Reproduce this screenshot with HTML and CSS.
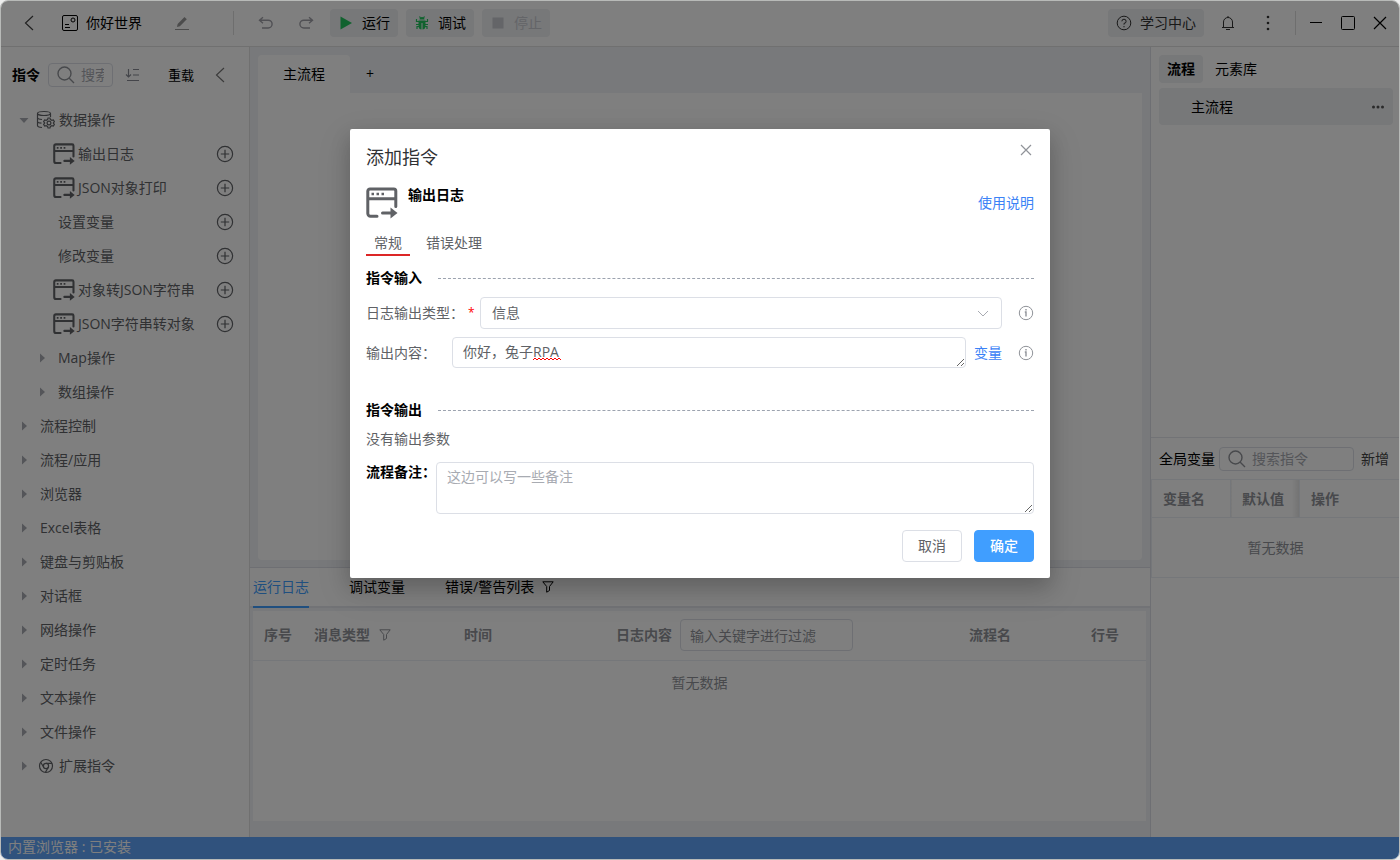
FILE: index.html
```html
<!DOCTYPE html>
<html lang="zh-CN">
<head>
<meta charset="utf-8">
<meta name="viewport" content="width=device-width, initial-scale=1">
<title>你好世界</title>
<link rel="stylesheet" href="styles.css">
</head>
<body>
<svg class="sprite" aria-hidden="true">
  <symbol id="i-window" viewBox="0 0 32 32"><path d="M11 29.200H4.500a2.700 2.700 0 0 1-2.700-2.700V4.200a2.200 2.200 0 0 1 2.200-2.200h23.800a2 2 0 0 1 2 2v15.500M2 11.700h27.500M16.500 26H27" fill="none" stroke="currentColor" stroke-width="3" stroke-linecap="round"/><path d="M24.500 20.500l7 5.500-7 5.500z" fill="currentColor"/><path d="M5.500 7H8M10.500 7H13M15.500 7H18" stroke="currentColor" stroke-width="2.500"/></symbol>
  <symbol id="i-plus" viewBox="0 0 18 18"><g fill="none" stroke="currentColor" stroke-width="1.200"><circle cx="9" cy="9" r="7.600"/><path d="M9 4.800v8.400M4.800 9h8.400"/></g></symbol>
  <symbol id="i-caret" viewBox="0 0 8 10"><path d="M2 .5v9L7 5z" fill="currentColor"/></symbol>
  <symbol id="i-left" viewBox="0 0 12 16"><path d="M10 1L2.500 8l7.500 7" fill="none" stroke="currentColor" stroke-width="1.200"/></symbol>
  <symbol id="i-search" viewBox="0 0 18 18"><path d="M12.500 12.500L17 17M14 7.500a6.500 6.500 0 1 1-13 0 6.500 6.500 0 0 1 13 0z" fill="none" stroke="currentColor" stroke-width="1.400"/></symbol>
  <symbol id="i-filter" viewBox="0 0 12 12"><path d="M.8.800h10.400L7.500 5.500v4L4.700 11.200V5.500z" fill="none" stroke="currentColor"/></symbol>
  <symbol id="i-info" viewBox="0 0 16 16"><circle cx="8" cy="8" r="6.700" fill="none" stroke="currentColor"/><path d="M8 4v1.500M6.800 7H8v4.500" fill="none" stroke="currentColor" stroke-width="1.400"/></symbol>
  <symbol id="i-undo" viewBox="0 0 16 16"><path d="M5 2.200L1.500 5.200l3.500 3M1.500 5.200h8.700a3.900 3.900 0 0 1 0 7.800H4" fill="none" stroke="currentColor" stroke-width="1.400"/></symbol>
</svg>

<div class="window">
  <header class="topbar">
    <button class="icon-btn back" aria-label="返回"><svg width="12" height="16"><use href="#i-left"/></svg></button>
    <svg class="doc" width="18" height="18" viewBox="0 0 18 18" fill="none" stroke="currentColor"><rect x="1.500" y="1.500" width="15" height="15" rx="1.500"/><circle cx="12" cy="6" r="2"/><path d="M4 10.500h4M4 13.500h5"/></svg>
    <span class="name">你好世界</span>
    <button class="icon-btn edit" aria-label="编辑"><svg width="16" height="16" viewBox="0 0 16 16"><path d="M1 14.500h14" stroke="currentColor"/><path d="M3 12l.6-3L10.500 2l2.300 2.300-6.900 7z" fill="currentColor"/></svg></button>
    <span class="divider"></span>
    <button class="icon-btn undo" aria-label="撤销"><svg width="16" height="16"><use href="#i-undo"/></svg></button>
    <button class="icon-btn redo" aria-label="重做"><svg class="flip" width="16" height="16"><use href="#i-undo"/></svg></button>
    <div class="actions">
      <button class="pill"><svg width="16" height="16" viewBox="0 0 16 16"><path d="M2.500 1.500l11.500 6.500-11.500 6.500z" fill="#22c55e"/></svg>运行</button>
      <button class="pill"><svg width="16" height="16" viewBox="0 0 16 16"><path d="M5.500 4.500a2.500 2.500 0 0 1 5 0zM4.500 5.500h7v5.500a3.500 3.500 0 0 1-7 0z" fill="#22c55e"/><path d="M5.500 1.500L6.500 3M10.500 1.500L9.500 3M2.500 4v2.500h3M13.500 4v2.500h-3M2 9.500h12M3 14v-2.500h3M13 14v-2.500h-3" fill="none" stroke="#22c55e" stroke-width="1.200"/><path d="M8 8v7" stroke="#f3f4f6"/></svg>调试</button>
      <button class="pill" disabled><svg width="16" height="16" viewBox="0 0 16 16"><path d="M2.500 2.500h11v11h-11z" fill="currentColor"/></svg>停止</button>
    </div>
    <button class="pill help"><svg width="16" height="16" viewBox="0 0 16 16" fill="none" stroke="currentColor"><circle cx="8" cy="8" r="6.800"/><path d="M5.900 6.300A2.100 2.100 0 1 1 8 8.400v1.200M8 11v1.300"/></svg>学习中心</button>
    <button class="icon-btn wide" aria-label="通知"><svg width="16" height="16" viewBox="0 0 16 16" fill="none" stroke="currentColor"><path d="M3.500 12V7a4.500 4.500 0 0 1 9 0v5M2 12.500h12M6 14.500h4M8 1v1.500"/></svg></button>
    <button class="icon-btn wide" aria-label="更多"><svg width="16" height="16" viewBox="0 0 16 16" fill="currentColor"><circle cx="8" cy="2" r="1.300"/><circle cx="8" cy="8" r="1.300"/><circle cx="8" cy="14" r="1.300"/></svg></button>
    <span class="divider right"></span>
    <div class="winctl">
      <button class="icon-btn" aria-label="最小化"><svg width="16" height="16" viewBox="0 0 16 16" stroke="currentColor"><path d="M2 7.500h12"/></svg></button>
      <button class="icon-btn" aria-label="最大化"><svg width="16" height="16" viewBox="0 0 16 16" fill="none" stroke="currentColor"><rect x="1.500" y="1.500" width="13" height="13" rx="1"/></svg></button>
      <button class="icon-btn" aria-label="关闭"><svg width="16" height="16" viewBox="0 0 16 16" stroke="currentColor" stroke-width="1.200"><path d="M2 2l12 12M14 2L2 14"/></svg></button>
    </div>
  </header>

  <div class="body">
    <aside class="sidebar">
      <div class="side-head">
        <b>指令</b>
        <label class="search"><svg width="18" height="18"><use href="#i-search"/></svg><input type="text" placeholder="搜索指令" aria-label="搜索指令"></label>
        <button class="icon-btn sort" aria-label="排序"><svg width="16" height="16" viewBox="0 0 16 16" fill="none" stroke="currentColor" stroke-width="1.200"><path d="M3.500 2v8M1 7.500L3.500 10 6 7.500M8 2.500h6M8 8h6M2 13.500h12"/></svg></button>
        <button class="reload">重载</button>
        <button class="icon-btn fold" aria-label="收起"><svg width="12" height="16"><use href="#i-left"/></svg></button>
      </div>
      <ul class="tree">
        <li class="open"><svg class="caret" width="8" height="10"><use href="#i-caret"/></svg><svg class="group" width="20" height="20" viewBox="0 0 20 20" fill="none" stroke="currentColor" stroke-width="1.200"><ellipse cx="8" cy="3.500" rx="6.500" ry="2"/><path d="M1.500 3.500v12c0 1 2 1.800 4.500 2M14.500 3.500V7M1.500 7.500c0 1 2 1.800 4.500 2M1.500 11.500c0 1 2 1.500 4 1.700"/><circle cx="13" cy="13" r="1.900"/><path d="M12 8h2l.4 1.600 1.500.8 1.500-.5 1 1.700-1.100 1.400 1.100 1.400-1 1.700-1.500-.5-1.500.8L14 18h-2l-.4-1.600-1.500-.8-1.500.5-1-1.700L8.700 13l-1.100-1.400 1-1.700 1.500.5 1.500-.8z"/></svg>数据操作</li>
        <li class="leaf"><svg width="22" height="22"><use href="#i-window"/></svg>输出日志<button class="icon-btn" aria-label="添加"><svg width="18" height="18"><use href="#i-plus"/></svg></button></li>
        <li class="leaf"><svg width="22" height="22"><use href="#i-window"/></svg>JSON对象打印<button class="icon-btn" aria-label="添加"><svg width="18" height="18"><use href="#i-plus"/></svg></button></li>
        <li class="leaf plain">设置变量<button class="icon-btn" aria-label="添加"><svg width="18" height="18"><use href="#i-plus"/></svg></button></li>
        <li class="leaf plain">修改变量<button class="icon-btn" aria-label="添加"><svg width="18" height="18"><use href="#i-plus"/></svg></button></li>
        <li class="leaf"><svg width="22" height="22"><use href="#i-window"/></svg>对象转JSON字符串<button class="icon-btn" aria-label="添加"><svg width="18" height="18"><use href="#i-plus"/></svg></button></li>
        <li class="leaf"><svg width="22" height="22"><use href="#i-window"/></svg>JSON字符串转对象<button class="icon-btn" aria-label="添加"><svg width="18" height="18"><use href="#i-plus"/></svg></button></li>
        <li class="sub"><svg class="caret" width="8" height="10"><use href="#i-caret"/></svg>Map操作</li>
        <li class="sub"><svg class="caret" width="8" height="10"><use href="#i-caret"/></svg>数组操作</li>
        <li><svg class="caret" width="8" height="10"><use href="#i-caret"/></svg>流程控制</li>
        <li><svg class="caret" width="8" height="10"><use href="#i-caret"/></svg>流程/应用</li>
        <li><svg class="caret" width="8" height="10"><use href="#i-caret"/></svg>浏览器</li>
        <li><svg class="caret" width="8" height="10"><use href="#i-caret"/></svg>Excel表格</li>
        <li><svg class="caret" width="8" height="10"><use href="#i-caret"/></svg>键盘与剪贴板</li>
        <li><svg class="caret" width="8" height="10"><use href="#i-caret"/></svg>对话框</li>
        <li><svg class="caret" width="8" height="10"><use href="#i-caret"/></svg>网络操作</li>
        <li><svg class="caret" width="8" height="10"><use href="#i-caret"/></svg>定时任务</li>
        <li><svg class="caret" width="8" height="10"><use href="#i-caret"/></svg>文本操作</li>
        <li><svg class="caret" width="8" height="10"><use href="#i-caret"/></svg>文件操作</li>
        <li><svg class="caret" width="8" height="10"><use href="#i-caret"/></svg><svg class="ext" width="16" height="16" viewBox="0 0 16 16" fill="none" stroke="currentColor" stroke-width="1.200"><circle cx="8" cy="8" r="6.500"/><circle cx="8" cy="8" r="2.600"/><path d="M8 5.400h6M5.700 9.300L2.700 4.300M10.300 9.300L7.400 14.400"/></svg>扩展指令</li>
      </ul>
    </aside>

    <main class="center">
      <section class="work">
        <div class="work-tabs"><button class="work-tab">主流程</button><button class="add-tab" aria-label="新增">+</button></div>
        <div class="canvas"></div>
      </section>
      <section class="logs">
        <div class="log-tabs">
          <button class="active">运行日志</button>
          <button>调试变量</button>
          <button>错误/警告列表<svg width="12" height="12"><use href="#i-filter"/></svg></button>
        </div>
        <div class="log-body">
          <table class="log-table">
            <colgroup><col class="c-no"><col class="c-type"><col class="c-time"><col><col class="c-flow"><col class="c-line"></colgroup>
            <thead><tr>
              <th>序号</th>
              <th>消息类型<svg class="filter" width="12" height="12"><use href="#i-filter"/></svg></th>
              <th>时间</th>
              <th><label class="filter-field">日志内容<input type="text" placeholder="输入关键字进行过滤"></label></th>
              <th>流程名</th>
              <th>行号</th>
            </tr></thead>
            <tbody><tr><td colspan="6">暂无数据</td></tr></tbody>
          </table>
        </div>
      </section>
    </main>

    <aside class="panel">
      <section class="flows">
        <div class="panel-tabs"><button class="on">流程</button><button>元素库</button></div>
        <div class="flow-item">主流程<button class="icon-btn" aria-label="更多"><svg width="14" height="14" viewBox="0 0 14 14" fill="currentColor"><circle cx="2.500" cy="7" r="1.500"/><circle cx="7" cy="7" r="1.500"/><circle cx="11.500" cy="7" r="1.500"/></svg></button></div>
      </section>
      <section class="vars">
        <div class="vars-head">
          <span>全局变量</span>
          <label class="search"><svg width="18" height="18"><use href="#i-search"/></svg><input type="text" placeholder="搜索指令" aria-label="搜索变量"></label>
          <button>新增</button>
        </div>
        <table class="vars-table">
          <colgroup><col class="v-name"><col class="v-value"><col></colgroup>
          <thead><tr><th>变量名</th><th class="edge">默认值</th><th>操作</th></tr></thead>
          <tbody><tr><td colspan="3">暂无数据</td></tr></tbody>
        </table>
      </section>
    </aside>
  </div>
  <footer class="status">内置浏览器 : 已安装</footer>

  <div class="overlay">
    <form class="dialog" role="dialog" aria-labelledby="dlg-title">
      <div class="dlg-head"><h1 id="dlg-title">添加指令</h1><button type="button" class="icon-btn" aria-label="关闭"><svg width="16" height="16" viewBox="0 0 16 16" stroke="currentColor" stroke-width="1.200"><path d="M3 3l10 10M13 3L3 13"/></svg></button></div>
      <div class="cmd"><svg width="32" height="32"><use href="#i-window"/></svg><h2>输出日志</h2><a href="#help">使用说明</a></div>
      <div class="dlg-tabs"><button type="button" class="active">常规</button><button type="button">错误处理</button></div>
      <h3 class="sect">指令输入</h3>
      <div class="fields">
        <div class="field">
          <label for="log-type">日志输出类型：</label><span class="req">*</span>
          <div class="select"><select id="log-type"><option>信息</option></select><svg width="12" height="8" viewBox="0 0 12 8" fill="none" stroke="currentColor"><path d="M1 1l5 5 5-5"/></svg></div>
          <svg class="info" width="16" height="16"><use href="#i-info"/></svg>
        </div>
        <div class="field text">
          <label class="fixed" for="log-text">输出内容：</label>
          <div class="spell"><textarea id="log-text" rows="1" spellcheck="false">你好，兔子RPA</textarea><svg class="wave" width="28" height="4" viewBox="0 0 28 4" fill="none" stroke="#f00"><path d="M0 3l2-2 2 2 2-2 2 2 2-2 2 2 2-2 2 2 2-2 2 2 2-2 2 2 2-2 2 2"/></svg></div>
          <button type="button" class="var">变量</button>
          <svg class="info" width="16" height="16"><use href="#i-info"/></svg>
        </div>
      </div>
      <h3 class="sect out">指令输出</h3>
      <p class="none">没有输出参数</p>
      <div class="remark"><label for="remark">流程备注：</label><textarea id="remark" placeholder="这边可以写一些备注"></textarea></div>
      <div class="dlg-foot"><button type="button" class="btn">取消</button><button type="button" class="btn primary">确定</button></div>
    </form>
  </div>
</div>
</body>
</html>
```
FILE: styles.css
```css
* { box-sizing: border-box; }
body {
  margin: 0;
  background: #eee;
  color: #000;
  font: 14px/20px "Open Sans", "Noto Sans CJK SC", sans-serif;
}
button, input, select, textarea { font: inherit; color: inherit; }
button { padding: 0; border: 0; background: none; cursor: pointer; white-space: nowrap; }
svg { display: block; flex: none; }
h1, h2, h3, p, ul { margin: 0; padding: 0; }
.sprite { position: absolute; width: 0; height: 0; }

.window {
  position: relative;
  display: flex;
  flex-direction: column;
  height: 100vh;
  border: 1px solid #b8bab8;
  border-radius: 8px;
  overflow: hidden;
  background: #fff;
}
.icon-btn { display: flex; align-items: center; justify-content: center; flex: none; }

/* top bar */
.topbar {
  display: flex;
  align-items: center;
  height: 46px;
  flex: none;
  padding: 0 11px 2px 22px;
  border-bottom: 1px solid #e0e0e0;
}
.back { color: #444; }
.doc { margin: 0 7px 0 26px; }
.name { width: 88px; }
.edit { color: #999; }
.divider { width: 1px; height: 24px; margin: 0 24px 0 43px; background: #dcdcdc; }
.undo, .redo { color: #a0a0a8; }
.redo { margin: 0 16px 0 24px; }
.flip { transform: scaleX(-1); }
.actions { display: flex; gap: 8px; }
.pill {
  display: flex;
  align-items: center;
  gap: 8px;
  height: 28px;
  padding: 0 8px;
  border-radius: 4px;
  background: #eef0f3;
}
.pill:disabled { color: #c8cad0; }
.help { margin-left: auto; margin-right: 4px; color: #333; }
.wide { width: 40px; color: #333; }
.divider.right { margin: 0 12px 0 7px; }
.winctl { display: flex; gap: 16px; }

.body { display: flex; flex: 1; min-height: 0; }

/* left tree */
.sidebar { width: 249px; flex: none; border-right: 1px solid #e0e0e0; }
.side-head { display: flex; align-items: center; height: 56px; padding: 0 23px 0 11px; }
.search {
  display: flex;
  align-items: center;
  gap: 6px;
  height: 24px;
  padding: 0 8px;
  border: 1px solid #dcdfe6;
  border-radius: 4px;
  color: #909399;
}
.search input { flex: 1; min-width: 0; padding: 0; border: 0; outline: 0; background: none; }
::placeholder { color: #a8abb2; opacity: 1; }
.side-head .search { width: 65px; margin-left: 8px; }
.sort { margin: 0 27px 0 12px; color: #888b94; }
.reload { font-size: 13px; }
.fold { margin-left: auto; color: #777; }
.tree { list-style: none; color: #606266; }
.tree li { display: flex; align-items: center; height: 34px; padding: 0 16px 0 19px; }
.tree .caret { margin-right: 12px; color: #a8abb2; }
.tree .open .caret { transform: rotate(90deg); margin-right: 8px; }
.tree .sub { padding-left: 37px; }
.tree .leaf { padding: 0 15px 0 52px; }
.tree .leaf > svg { margin-right: 3px; }
.tree .plain { padding-left: 57px; }
.tree .leaf button { margin-left: auto; }
.group { margin-right: 3px; }
.ext { margin: 0 5px 0 -2px; }

/* centre */
.center { display: flex; flex-direction: column; flex: 1; min-width: 0; background: #f1f3f6; }
.work { display: flex; flex-direction: column; flex: 1; padding: 8px 8px 7px; }
.work-tabs { display: flex; }
.work-tab { width: 92px; height: 38px; background: #fff; border-radius: 4px 4px 0 0; }
.add-tab { width: 40px; }
.canvas { flex: 1; background: #fff; border-radius: 0 0 4px 4px; }
.logs { display: flex; flex-direction: column; height: 270px; border-top: 1px solid #dcdfe6; }
.log-tabs { display: flex; gap: 40px; padding-left: 3px; border-bottom: 2px solid #e4e7ed; background: #fff; }
.log-tabs button { display: flex; align-items: center; gap: 8px; height: 40px; margin-bottom: -2px; border-bottom: 2px solid transparent; }
.log-tabs .active { color: #409eff; border-color: #409eff; }
.log-body { flex: 1; margin: 3px 4px 16px 3px; background: #fff; }
table { width: 100%; border-collapse: collapse; table-layout: fixed; }
th { color: #909399; text-align: left; white-space: nowrap; }
td { padding: 0; text-align: center; color: #909399; }
.log-table th { height: 49px; padding: 0 0 0 11px; border-bottom: 1px solid #ebeef5; }
.log-table td { height: 45px; }
.c-no { width: 50px; }
.c-type { width: 150px; }
.c-time { width: 152px; }
.c-flow { width: 122px; }
.c-line { width: 66px; }
.filter { display: inline-block; margin-left: 9px; vertical-align: -1px; }
.filter-field { display: flex; align-items: center; gap: 8px; }
.filter-field input { width: 173px; height: 32px; padding: 0 9px; border: 1px solid #dcdfe6; border-radius: 4px; font-weight: 400; background: #fff; }
.filter-field input::placeholder { color: #909399; }

/* right panel */
.panel { display: flex; flex-direction: column; width: 249px; flex: none; border-left: 1px solid #dcdfe6; }
.flows { flex: none; height: 391px; padding: 8px 6px 0 8px; border-bottom: 1px solid #e4e7ed; }
.panel-tabs { display: flex; gap: 4px; margin-bottom: 5px; }
.panel-tabs button { height: 28px; padding: 0 8px; border-radius: 4px; }
.panel-tabs .on { background: #eef0f3; font-weight: 700; }
.flow-item { display: flex; align-items: center; justify-content: space-between; height: 37px; padding: 0 8px 0 32px; border-radius: 4px; background: #eef0f3; }
.flow-item button { color: #555; }
.vars-head { display: flex; align-items: center; gap: 4px; height: 41px; padding: 0 10px 0 8px; white-space: nowrap; }
.vars-head .search { flex: 1; min-width: 0; margin-right: 3px; }
.vars-head button { color: #444; }
.vars-table { border: 1px solid #ebeef5; border-right: 0; }
.vars-table th { height: 38px; padding: 0 0 0 11px; border: 1px solid #ebeef5; border-right: 0; }
.vars-table .edge { background: linear-gradient(to left, #e6e6e6, #fff 8px); }
.vars-table td { height: 60px; }
.v-name { width: 79px; }
.v-value { width: 69px; }

.status { flex: none; height: 22px; padding-left: 7px; background: #60a5fa; color: #fff; }

/* dialog */
.overlay {
  position: absolute;
  inset: 0;
  display: flex;
  align-items: flex-start;
  justify-content: center;
  padding-top: 128px;
  background: rgba(0, 0, 0, .5);
}
.dialog {
  width: 700px;
  max-width: 100%;
  padding: 16px;
  border-radius: 2px;
  background: #fff;
  color: #606266;
  box-shadow: 0 12px 32px 4px rgba(0, 0, 0, .1), 0 8px 20px rgba(0, 0, 0, .16);
}
.dlg-head { display: flex; justify-content: space-between; align-items: flex-start; height: 24px; color: #909399; }
.dlg-head h1 { font-size: 18px; line-height: 24px; font-weight: 400; color: #303133; }
.dlg-head button { margin-top: -3px; }
.cmd { display: flex; align-items: center; gap: 10px; margin-top: 18px; }
.cmd h2 { align-self: flex-start; font-size: 14px; line-height: 16px; font-weight: 700; color: #000; }
.cmd a { margin-left: auto; text-decoration: none; }
.cmd a, .var { color: #3b82f6; }
.dlg-tabs { display: flex; gap: 8px; margin-top: 12px; }
.dlg-tabs button { padding: 1px 8px 0; line-height: 22px; border-bottom: 2px solid transparent; }
.dlg-tabs .active { border-color: #dc2626; }
.sect { display: flex; align-items: center; gap: 16px; margin-top: 11px; font-size: 14px; line-height: 22px; color: #000; }
.sect::after { content: ""; flex: 1; border-top: 1px dashed #9ca3af; }
.sect.out { margin-top: 31px; }
.fields { display: flex; flex-direction: column; gap: 8px; margin-top: 8px; }
.field { display: flex; align-items: center; height: 32px; }
.field.text { height: 31px; }
.req { width: 8px; margin: 0 4px; color: #f00; font-size: 12px; }
.select { position: relative; flex: 1; }
.select select { display: block; width: 100%; height: 32px; padding: 0 11px; border: 1px solid #dcdfe6; border-radius: 4px; appearance: none; background: #fff; }
.select svg { position: absolute; right: 13px; top: 13px; color: #a8abb2; pointer-events: none; }
.info { margin-left: 16px; color: #909399; }
.fixed { width: 86px; }
.spell { position: relative; flex: 1; }
textarea { display: block; width: 100%; padding: 4px 10px; border: 1px solid #dcdfe6; border-radius: 4px; resize: vertical; background: #fff; }
.spell textarea { height: 31px; overflow: hidden; }
.wave { position: absolute; left: 81px; top: 20px; pointer-events: none; }
.var { margin-left: 8px; }
.none { margin-top: 7px; line-height: 22px; }
.remark { display: flex; margin-top: 12px; }
.remark label { flex: none; width: 70px; font-weight: 700; color: #000; }
.remark textarea { flex: 1; height: 52px; }
.dlg-foot { display: flex; justify-content: flex-end; gap: 12px; margin-top: 16px; }
.btn { width: 60px; height: 32px; border: 1px solid #dcdfe6; border-radius: 4px; }
.primary { border-color: #409eff; background: #409eff; color: #fff; font-weight: 500; }
```
